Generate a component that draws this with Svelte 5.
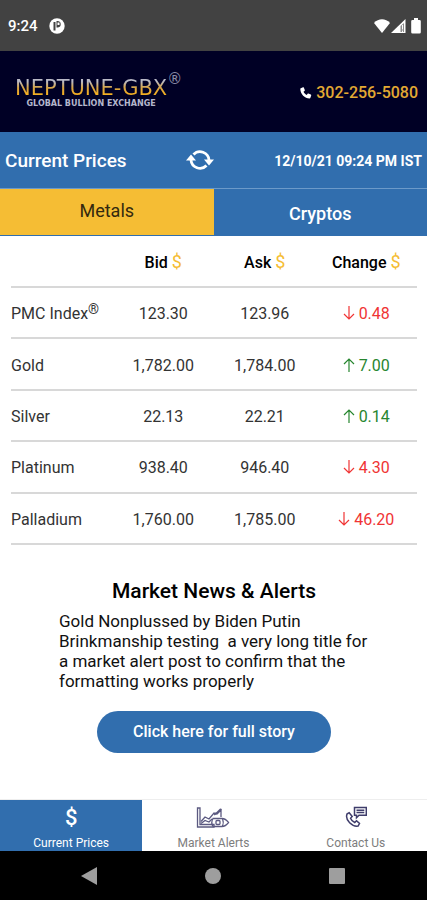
<script>
	const tabs = ['Metals', 'Cryptos'];
	let activeTab = 'Metals';

	const columns = ['Bid', 'Ask', 'Change'];

	const metals = [
		{ name: 'PMC Index', registered: true, bid: '123.30', ask: '123.96', change: '0.48', up: false },
		{ name: 'Gold', bid: '1,782.00', ask: '1,784.00', change: '7.00', up: true },
		{ name: 'Silver', bid: '22.13', ask: '22.21', change: '0.14', up: true },
		{ name: 'Platinum', bid: '938.40', ask: '946.40', change: '4.30', up: false },
		{ name: 'Palladium', bid: '1,760.00', ask: '1,785.00', change: '46.20', up: false }
	];
</script>

<div class="app">
	<div class="status-bar">
		<span class="clock">9:24</span>
		<svg class="notification" width="16" height="16" viewBox="0 0 16 16" aria-hidden="true">
			<circle cx="8" cy="8" r="7.7" fill="#fff" />
			<path d="M4.500 4h2v8.500h-2zM7.500 3h1.500a3.300 3.300 0 0 1 0 6.500H7.500z" fill="#424242" />
			<path d="M8.500 4.500h2v2.500h-2z" fill="#fff" />
		</svg>
		<div class="status-icons">
			<svg width="18" height="16" viewBox="0 0 18 16" aria-hidden="true">
				<path d="M9 15 1 5c4.500-5 11.500-5 16 0z" fill="#fff" />
			</svg>
			<svg width="15" height="16" viewBox="0 0 15 16" aria-hidden="true">
				<path d="M0 15 14.500 1v14z" fill="#fff" />
				<path d="M9.500 8 13 5v9h-3.500z" fill="#8e8e8e" />
				<path d="M11.500 7v4.500M11.500 12.500v1.500" stroke="#fff" stroke-width="1" />
			</svg>
			<svg class="battery" width="10" height="16" viewBox="0 0 10 16" aria-hidden="true">
				<path d="M3 0h4v2h1.500a1.300 1.300 0 0 1 1.300 1.300v10.900a1.300 1.300 0 0 1-1.300 1.300h-7A1.300 1.300 0 0 1 .2 14.200V3.300A1.300 1.300 0 0 1 1.500 2H3z" fill="#fff" />
			</svg>
		</div>
	</div>

	<header class="header">
		<div class="logo">
			<div class="logo-text">
				<span class="logo-name">NEPTUNE-GBX</span>
				<span class="logo-tagline">GLOBAL BULLION EXCHANGE</span>
			</div>
			<span class="logo-mark">®</span>
		</div>
		<a class="phone" href="tel:3022565080">
			<svg width="12" height="12" viewBox="0 0 12 12" aria-hidden="true">
				<path d="M.8 1.200 3 .3c.4-.1.7 0 .9.4l.9 2.300c.1.4 0 .7-.3.9l-1 .9c.7 1.400 1.600 2.400 3.100 3.100l.9-1c.3-.3.6-.4.9-.3l2.400 1c.4.2.5.5.4.9l-.8 2.200c-.1.4-.4.7-.8.7C4.600 11.400.6 7.400.3 2c0-.4.1-.7.5-.8z" fill="#fff" />
			</svg>
			302-256-5080
		</a>
	</header>

	<div class="title-bar">
		<h1>Current Prices</h1>
		<button class="refresh" aria-label="Refresh">
			<svg width="28" height="24" viewBox="0 0 28 24" fill="none" aria-hidden="true">
				<path d="M7.500 5.500a9 9 0 0 1 15.500 5.500M20.500 16.500A9 9 0 0 1 5 11" stroke="#fff" stroke-width="2.800" />
				<path d="M18 10.500h10l-5 6zM0 11.500h10l-5-6z" fill="#fff" />
			</svg>
		</button>
		<span class="timestamp">12/10/21 09:24 PM IST</span>
	</div>

	<div class="tabs">
		{#each tabs as tab}
			<button class="tab" class:active={activeTab === tab} on:click={() => (activeTab = tab)}>{tab}</button>
		{/each}
	</div>

	<main>
		<table>
			<thead>
				<tr>
					<td></td>
					{#each columns as column}
						<th scope="col">{column} <span class="dollar">$</span></th>
					{/each}
				</tr>
			</thead>
			<tbody>
				{#each metals as metal}
					<tr>
						<th scope="row">{metal.name}{#if metal.registered}<sup>®</sup>{/if}</th>
						<td>{metal.bid}</td>
						<td>{metal.ask}</td>
						<td class={metal.up ? 'up' : 'down'}>
							<svg width="12" height="14" viewBox="0 0 12 14" fill="none" stroke="currentColor" stroke-width="1.200" aria-hidden="true">
								{#if metal.up}
									<path d="M6 14V1M1 6l5-5 5 5" />
								{:else}
									<path d="M6 0v13M1 8l5 5 5-5" />
								{/if}
							</svg>
							{metal.change}
						</td>
					</tr>
				{/each}
			</tbody>
		</table>

		<section class="news">
			<h2>Market News &amp; Alerts</h2>
			<p>Gold Nonplussed by Biden Putin Brinkmanship testing&nbsp; a very long title for a market alert post to confirm that the formatting works properly</p>
			<button class="story">Click here for full story</button>
		</section>
	</main>

	<nav class="bottom-nav">
		<a class="active" href="#prices">
			<span class="nav-dollar">$</span>
			<span>Current Prices</span>
		</a>
		<a href="#alerts">
			<svg width="34" height="24" viewBox="0 0 34 24" fill="none" stroke="#5b5980" stroke-width="1.300" aria-hidden="true">
				<path d="M1.500 2H4v16.500h14V21H1.500z" />
				<path d="M5 15.500 9 11l4 2 5-6 3 1 4-4v7M5 17.500l4-3 4 1.500 3-3" />
				<path d="M18 8.500 21 7l4-4" stroke-width="2" />
				<path d="M17 12.500h9c3 0 5 2 6.500 4-1.500 2-3.500 4-6.500 4h-9c-1.500-2.500-1.500-5.500 0-8zM26.500 12.500c1 2.500 1 5.500 0 8" />
				<rect x="20" y="14.500" width="4" height="4" rx="1" />
			</svg>
			<span>Market Alerts</span>
		</a>
		<a href="#contact">
			<svg width="22" height="24" viewBox="0 0 22 24" fill="none" stroke="#3f3d6b" stroke-width="1.500" aria-hidden="true">
				<path d="M9.500 1.500h11.800v7.800H14l-2.500 2.400V9.300h-2z" />
				<path d="M11.500 4.200h7.800M11.500 6.600h7.800" />
				<path d="M2 8l2.200-1.300 3 3.800-1.700 1.800c.8 2 2.300 3.400 4.200 4.200l1.800-1.700 3 2.700-1.400 2.600C7.500 21-.2 14.500 2 8z" />
			</svg>
			<span>Contact Us</span>
		</a>
	</nav>

	<div class="system-nav">
		<button aria-label="Back">
			<svg width="18" height="18" viewBox="0 0 18 18" aria-hidden="true"><path d="M17 0v18L1 9z" fill="#9e9e9e" /></svg>
		</button>
		<button aria-label="Home">
			<svg width="18" height="18" viewBox="0 0 18 18" aria-hidden="true"><circle cx="9" cy="9" r="8" fill="#9e9e9e" /></svg>
		</button>
		<button aria-label="Recent apps">
			<svg width="18" height="18" viewBox="0 0 18 18" aria-hidden="true"><rect x="1" y="1" width="16" height="16" rx="1" fill="#9e9e9e" /></svg>
		</button>
	</div>
</div>

<style>
	:global(body) {
		margin: 0;
	}

	.app {
		display: flex;
		flex-direction: column;
		min-height: 100vh;
		background: #fff;
		color: #000;
		font-family: Roboto, 'Liberation Sans', sans-serif;
		font-size: 16px;
	}

	button {
		padding: 0;
		border: none;
		background: none;
		font: inherit;
		color: inherit;
		cursor: pointer;
	}

	a {
		color: inherit;
		text-decoration: none;
	}

	svg {
		display: block;
	}

	h1,
	h2,
	p {
		margin: 0;
	}

	.status-bar {
		display: flex;
		align-items: center;
		padding: 14px 6px 13px 8px;
		background: #424242;
		color: #fff;
	}

	.clock {
		font-size: 15px;
		line-height: 24px;
		font-weight: 500;
	}

	.notification {
		margin-left: 11px;
	}

	.status-icons {
		display: flex;
		margin-left: auto;
	}

	.battery {
		margin-left: 5px;
	}

	.header {
		display: flex;
		align-items: center;
		justify-content: space-between;
		padding: 20px 9px 18px 15px;
		background: #000025;
	}

	.logo {
		display: flex;
		align-items: flex-start;
	}

	.logo-text {
		display: flex;
		flex-direction: column;
		align-items: center;
		padding: 6px 0;
		font-family: 'DejaVu Sans', sans-serif;
	}

	.logo-name {
		font-size: 21px;
		line-height: 22px;
		background: linear-gradient(#b9b9c6 20%, #d9a441 50%, #f5b021 80%);
		background-clip: text;
		color: transparent;
	}

	.logo-tagline {
		font-size: 8px;
		line-height: 9px;
		font-weight: 700;
		color: #b4b6cc;
	}

	.logo-mark {
		font-family: 'DejaVu Sans', sans-serif;
		font-size: 15px;
		line-height: 16px;
		color: #8a8aa5;
	}

	.phone {
		display: flex;
		align-items: center;
		gap: 4px;
		line-height: 24px;
		font-weight: 500;
		color: #e3a933;
	}

	.title-bar {
		display: flex;
		align-items: center;
		justify-content: space-between;
		padding: 17px 5px 15px;
		background: #316eae;
		border-bottom: 1px solid #6c9ac9;
		color: #fff;
	}

	h1 {
		font-size: 19px;
		line-height: 24px;
		font-weight: 500;
	}

	.timestamp {
		font-size: 14px;
		font-weight: 700;
		white-space: nowrap;
	}

	.tabs {
		display: flex;
		border-bottom: 1px solid #316eae;
		background: #316eae;
	}

	.tab {
		flex: 1;
		padding-top: 4px;
		line-height: 42px;
		font-size: 18px;
		font-weight: 500;
		color: #fff;
	}

	.tab.active {
		padding: 0 0 2px;
		line-height: 44px;
		background: #f5bd34;
		color: #33290f;
		font-weight: 400;
	}

	main {
		flex: 1;
		padding: 0 10px 24px 11px;
	}

	table {
		width: 100%;
		height: 309px;
		table-layout: fixed;
		border-collapse: collapse;
	}

	tr {
		height: 51px;
	}

	th,
	td {
		padding: 2px 0 0;
		border-bottom: 2px solid #d8d8d8;
		color: #333;
		text-align: center;
	}

	thead th {
		color: #000;
		font-weight: 500;
	}

	tbody th {
		font-weight: 400;
		text-align: left;
		white-space: nowrap;
	}

	sup {
		font-size: 14px;
		line-height: 0;
		vertical-align: 5px;
	}

	.dollar {
		font-size: 18px;
		font-weight: 400;
		line-height: 20px;
		color: #f5bd34;
	}

	td svg {
		display: inline-block;
		vertical-align: -1px;
	}

	.up {
		color: #27862f;
	}

	.down {
		color: #f03434;
	}

	.news {
		display: flex;
		flex-direction: column;
		align-items: center;
		padding-top: 34px;
	}

	h2 {
		font-size: 21px;
		line-height: 24px;
		font-weight: 500;
	}

	.news p {
		align-self: stretch;
		margin: 8px 46px 20px 48px;
		font-size: 17px;
		line-height: 20px;
		color: #111;
	}

	.story {
		padding: 0 36px;
		border-radius: 21px;
		background: #316eae;
		color: #fff;
		font-weight: 500;
		line-height: 42px;
	}

	.bottom-nav {
		display: flex;
		border-top: 1px solid #eee;
	}

	.bottom-nav a {
		flex: 1;
		display: flex;
		flex-direction: column;
		align-items: center;
		padding: 6px 0 0;
		gap: 5px;
		font-size: 12px;
		line-height: 16px;
		color: #7d7d7d;
	}

	.bottom-nav a.active {
		background: #316eae;
		color: #fff;
	}

	.nav-dollar {
		font-size: 22px;
		line-height: 24px;
		font-weight: 500;
	}

	.system-nav {
		display: flex;
		justify-content: space-between;
		padding: 16px 81px 15px 80px;
		background: #000;
	}
</style>
